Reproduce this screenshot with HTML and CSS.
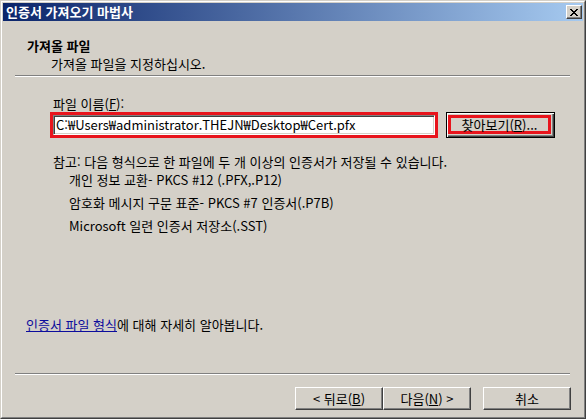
FILE: index.html
```html
<!DOCTYPE html>
<html lang="ko">
<head>
<meta charset="utf-8">
<title>인증서 가져오기 마법사</title>
<link rel="stylesheet" href="styles.css">
</head>
<body>
<div class="window">
  <div class="frame">
    <div class="titlebar">
      <span class="title">인증서 가져오기 마법사</span>
      <span class="close">
        <svg width="8" height="7" viewBox="0 0 8 7" shape-rendering="crispEdges">
          <rect x="0" y="0" width="2" height="1" fill="#000"/><rect x="6" y="0" width="2" height="1" fill="#000"/>
          <rect x="1" y="1" width="2" height="1" fill="#000"/><rect x="5" y="1" width="2" height="1" fill="#000"/>
          <rect x="2" y="2" width="4" height="1" fill="#000"/>
          <rect x="3" y="3" width="2" height="1" fill="#000"/>
          <rect x="2" y="4" width="4" height="1" fill="#000"/>
          <rect x="1" y="5" width="2" height="1" fill="#000"/><rect x="5" y="5" width="2" height="1" fill="#000"/>
          <rect x="0" y="6" width="2" height="1" fill="#000"/><rect x="6" y="6" width="2" height="1" fill="#000"/>
        </svg>
      </span>
    </div>
    <div class="header">
      <div class="h-title">가져올 파일</div>
      <div class="h-sub">가져올 파일을 지정하십시오.</div>
    </div>
    <div class="sep"></div>
    <div class="content">
      <div class="label">파일 이름(<u>F</u>):</div>
      <div class="file-row">
        <div class="input-wrap"><div class="input">C:₩Users₩administrator.THEJN₩Desktop₩Cert.pfx</div></div>
        <div class="browse"><span class="browse-mark">찾아보기(<u>R</u>)...</span></div>
      </div>
      <div class="note">참고: 다음 형식으로 한 파일에 두 개 이상의 인증서가 저장될 수 있습니다.</div>
      <ul class="formats">
        <li>개인 정보 교환- PKCS #12 (.PFX,.P12)</li>
        <li>암호화 메시지 구문 표준- PKCS #7 인증서(.P7B)</li>
        <li>Microsoft 일련 인증서 저장소(.SST)</li>
      </ul>
      <div class="more"><a class="link" href="#">인증서 파일 형식</a>에 대해 자세히 알아봅니다.</div>
    </div>
    <div class="sep sep-bottom"></div>
    <div class="buttons">
      <div class="btn">&lt; 뒤로(<u>B</u>)</div>
      <div class="btn">다음(<u>N</u>) &gt;</div>
      <div class="btn btn-cancel">취소</div>
    </div>
  </div>
</div>
</body>
</html>
```
FILE: styles.css
```css
* { box-sizing: border-box; }

body {
  margin: 0;
  background: #d4d0c8;
  font-family: "Noto Sans CJK KR", "Liberation Sans", sans-serif;
  font-size: 13px;
  color: #000;
}

.window {
  width: 586px;
  height: 419px;
  border: 1px solid;
  border-color: #d4d0c8 #404040 #404040 #d4d0c8;
}

.frame {
  height: 100%;
  border: 1px solid;
  border-color: #fff #808080 #808080 #fff;
  padding: 1px;
  background: #d4d0c8;
  display: flex;
  flex-direction: column;
}

.titlebar {
  height: 18px;
  background: linear-gradient(to right, #0a246a, #a6caf0);
  display: flex;
  align-items: center;
  justify-content: space-between;
  padding: 0 1px 0 3px;
}

.title {
  color: #fff;
  font-weight: bold;
  line-height: 18px;
}

.close {
  width: 16px;
  height: 14px;
  border: 1px solid;
  border-color: #fff #404040 #404040 #fff;
  box-shadow: inset -1px -1px #808080;
  background: #d4d0c8;
  display: flex;
  align-items: center;
  justify-content: center;
  padding-right: 1px;
}

.close svg { display: block; }

.header {
  padding: 17px 0 0 24px;
  line-height: 15px;
}

.h-title { font-weight: bold; }

.h-sub {
  margin-top: 3px;
  padding-left: 24px;
}

.sep {
  height: 2px;
  margin: 4px 13px 0 12px;
  border-top: 1px solid #808080;
  border-bottom: 1px solid #fff;
}

.content {
  padding-left: 50px;
  line-height: 15px;
}

.label { margin-top: 19px; }

.file-row {
  display: flex;
  margin-top: 1px;
  margin-left: -3px;
}

.input-wrap {
  width: 388px;
  height: 26px;
  border: 3px solid #e8141c;
}

.input {
  height: 100%;
  background: #fff;
  border: 1px solid;
  border-color: #808080 #fff #fff #808080;
  box-shadow: inset 1px 1px #404040, inset -1px -1px #d4d0c8;
  padding-left: 2px;
  line-height: 18px;
  white-space: nowrap;
  overflow: hidden;
}

.browse {
  width: 109px;
  height: 26px;
  margin-left: 8px;
  border: 1px solid #000;
  box-shadow: inset 1px 1px #fff, inset -1px -1px #404040, inset -2px -2px #808080;
  background: #d4d0c8;
  display: flex;
  padding: 2px 3px 3px 1px;
}

.browse-mark {
  flex: 1;
  border: 3px solid #e8141c;
  display: flex;
  align-items: center;
  justify-content: center;
}

.note { margin-top: 16px; }

.formats {
  list-style: none;
  margin: 3px 0 0 0;
  padding: 0 0 0 16px;
}

.formats li { margin-top: 8px; }
.formats li:first-child { margin-top: 0; }

.more {
  margin-top: 84px;
  margin-left: -27px;
}

.link { color: #0c0c9c; text-decoration: underline; }

.sep-bottom { margin-top: 41px; }

.buttons {
  display: flex;
  justify-content: flex-end;
  margin-top: 12px;
  padding-right: 12px;
}

.btn {
  width: 88px;
  height: 23px;
  border: 1px solid;
  border-color: #fff #404040 #404040 #fff;
  box-shadow: inset -1px -1px #808080;
  display: flex;
  align-items: center;
  justify-content: center;
  line-height: 15px;
}

.btn-cancel { margin-left: 12px; }
```
